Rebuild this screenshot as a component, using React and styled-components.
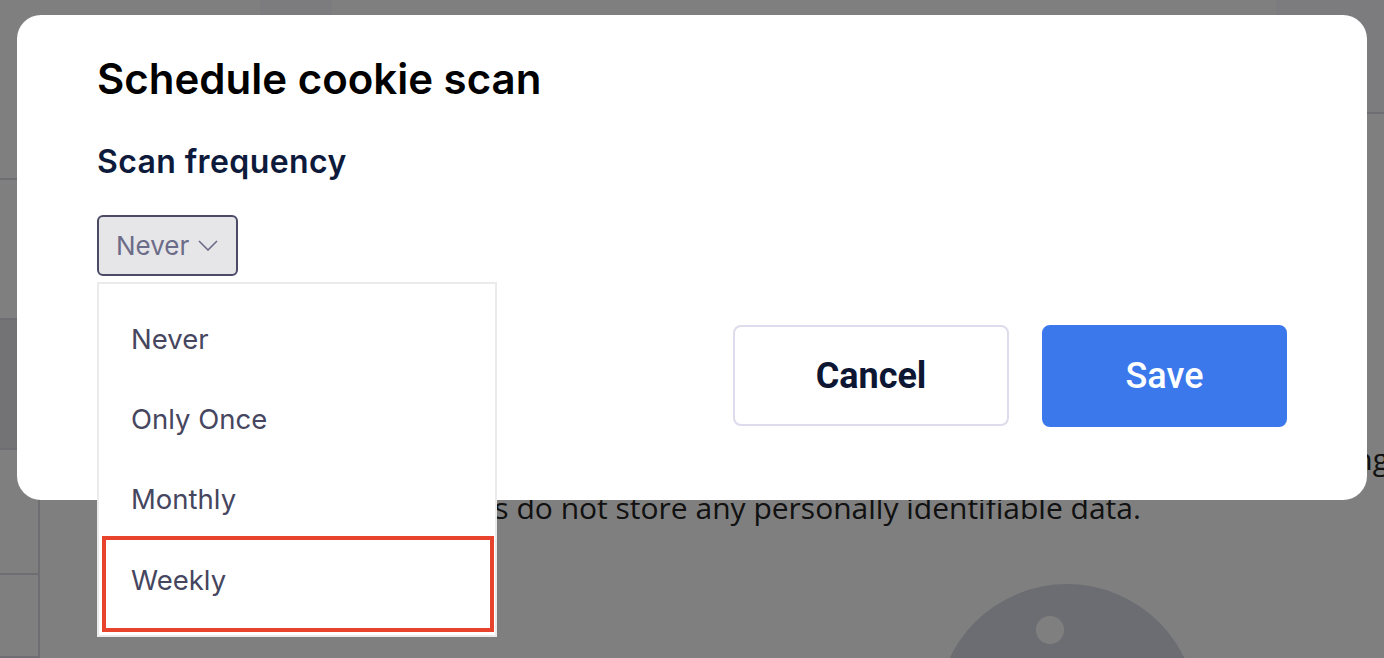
import React from "react";
import styled, { createGlobalStyle } from "styled-components";

const GlobalStyle = createGlobalStyle`
  html, body {
    margin: 0;
    padding: 0;
  }
  body {
    font-family: "Inter", "Liberation Sans", sans-serif;
    background: #fff;
    overflow: hidden;
  }
  * {
    box-sizing: border-box;
  }
`;

// the page sitting behind the dialog
const Page = styled.div`
  display: flex;
  width: 1384px;
  height: 658px;
  overflow: hidden;
  background: #fff;
`;

const Sidebar = styled.nav`
  width: 40px;
  flex-shrink: 0;
  display: flex;
  flex-direction: column;
`;

const SideItem = styled.div`
  height: ${(props) => props.$h}px;
  flex-shrink: 0;
  background: ${(props) => (props.$active ? "#e6e6ea" : "#fff")};
  border-bottom: 2px solid #dcdce4;
  border-right: 2px solid ${(props) => (props.$framed ? "#dcdce4" : "transparent")};
`;

const Main = styled.main`
  flex: 1;
  min-width: 0;
  display: flex;
  flex-direction: column;
`;

const Header = styled.header`
  height: 114px;
  flex-shrink: 0;
  display: flex;
  align-items: flex-start;
`;

const HeaderTab = styled.div`
  margin-left: 220px;
  width: 72px;
  height: 64px;
  background: #f8f8fc;
`;

const HeaderAction = styled.div`
  margin-left: auto;
  width: 108px;
  height: 114px;
  background: #f8f8fc;
  border-bottom: 2px solid #dcdce4;
`;

const Content = styled.section`
  padding: 320px 0 0 273px;
`;

const Paragraph = styled.p`
  margin: 0;
  font-family: "Open Sans", "Liberation Sans", sans-serif;
  font-size: 30px;
  line-height: 49px;
  color: #222;
  white-space: nowrap;
`;

const Illustration = styled.svg`
  display: block;
  margin: 52px 0 0 624px;
`;

// dialog
const Overlay = styled.div`
  position: fixed;
  inset: 0;
  background: rgba(0, 0, 0, 0.5);
  padding: 15px 17px;
`;

const Modal = styled.div`
  background: #fff;
  border-radius: 24px;
  padding: 39px 80px 73px;
`;

const Title = styled.h2`
  margin: 0;
  font-size: 42px;
  line-height: 50px;
  font-weight: 600;
  color: #000;
`;

const Label = styled.h3`
  margin: 39px 0 0;
  font-size: 32px;
  line-height: 38px;
  font-weight: 600;
  letter-spacing: 0.4px;
  color: #0d1a3b;
`;

const Row = styled.div`
  margin-top: 34px;
  display: flex;
  justify-content: space-between;
  align-items: flex-start;
`;

const SelectWrap = styled.div`
  position: relative;
`;

const SelectButton = styled.button`
  width: 141px;
  height: 61px;
  display: flex;
  align-items: center;
  gap: 9px;
  padding: 0 0 0 17px;
  background: #e6e6e8;
  border: 2px solid #4b4b66;
  border-radius: 6px;
  font-family: inherit;
  font-size: 26px;
  color: #6c6c88;
`;

const Menu = styled.ul`
  position: absolute;
  top: 67px;
  left: 0;
  width: 400px;
  margin: 0;
  padding: 15px 1px 3px 3px;
  list-style: none;
  background: #fff;
  border: 2px solid #ebebeb;
`;

const MenuItem = styled.li`
  display: flex;
  align-items: center;
  height: ${(props) => (props.$marked ? 96 : 80)}px;
  margin-top: ${(props) => (props.$marked ? -3 : 0)}px;
  padding: ${(props) => (props.$marked ? "0 0 9px 25px" : "0 0 0 29px")};
  border: ${(props) => (props.$marked ? "4px solid #e8432d" : "none")};
  font-size: 27.5px;
  color: #46465f;
`;

const Actions = styled.div`
  margin-top: 110px;
  display: flex;
  gap: 33px;
`;

const Button = styled.button`
  width: ${(props) => (props.$primary ? 245 : 276)}px;
  height: ${(props) => (props.$primary ? 102 : 101)}px;
  border-radius: 8px;
  border: 2px solid ${(props) => (props.$primary ? "#3b78ec" : "#dcdcec")};
  background: ${(props) => (props.$primary ? "#3b78ec" : "#fff")};
  color: ${(props) => (props.$primary ? "#fff" : "#0d1733")};
  font-family: "Roboto", "Inter", sans-serif;
  font-size: 36px;
  font-weight: ${(props) => (props.$primary ? 500 : 700)};
`;

const options = ["Never", "Only Once", "Monthly", "Weekly"];

const Chevron = () => (
  <svg width="20" height="11" viewBox="0 0 20 11" fill="none">
    <polyline points="1,1 10,10 19,1" stroke="#6c6c88" strokeWidth="1.6" />
  </svg>
);

const App = () => {
  return (
    <>
      <GlobalStyle />
      <Page>
        <Sidebar>
          <SideItem $h={180} />
          <SideItem $h={140} />
          <SideItem $h={130} $active />
          <SideItem $h={125} $framed />
          <SideItem $h={83} $framed />
        </Sidebar>
        <Main>
          <Header>
            <HeaderTab />
            <HeaderAction />
          </Header>
          <Content>
            <Paragraph>
              We use cookies to understand how visitors interact with website by collecting
              <br />
              These cookies do not store any personally identifiable data.
            </Paragraph>
            <Illustration width="260" height="260" viewBox="0 0 260 260">
              <circle cx="130" cy="130" r="130" fill="#d8dae4" />
              <circle cx="113" cy="46" r="14" fill="#fff" />
            </Illustration>
          </Content>
        </Main>
      </Page>
      <Overlay>
        <Modal>
          <Title>Schedule cookie scan</Title>
          <Label>Scan frequency</Label>
          <Row>
            <SelectWrap>
              <SelectButton>
                Never
                <Chevron />
              </SelectButton>
              <Menu>
                {options.map((option) => (
                  <MenuItem key={option} $marked={option === "Weekly"}>
                    {option}
                  </MenuItem>
                ))}
              </Menu>
            </SelectWrap>
            <Actions>
              <Button>Cancel</Button>
              <Button $primary>Save</Button>
            </Actions>
          </Row>
        </Modal>
      </Overlay>
    </>
  );
};

export default App;
